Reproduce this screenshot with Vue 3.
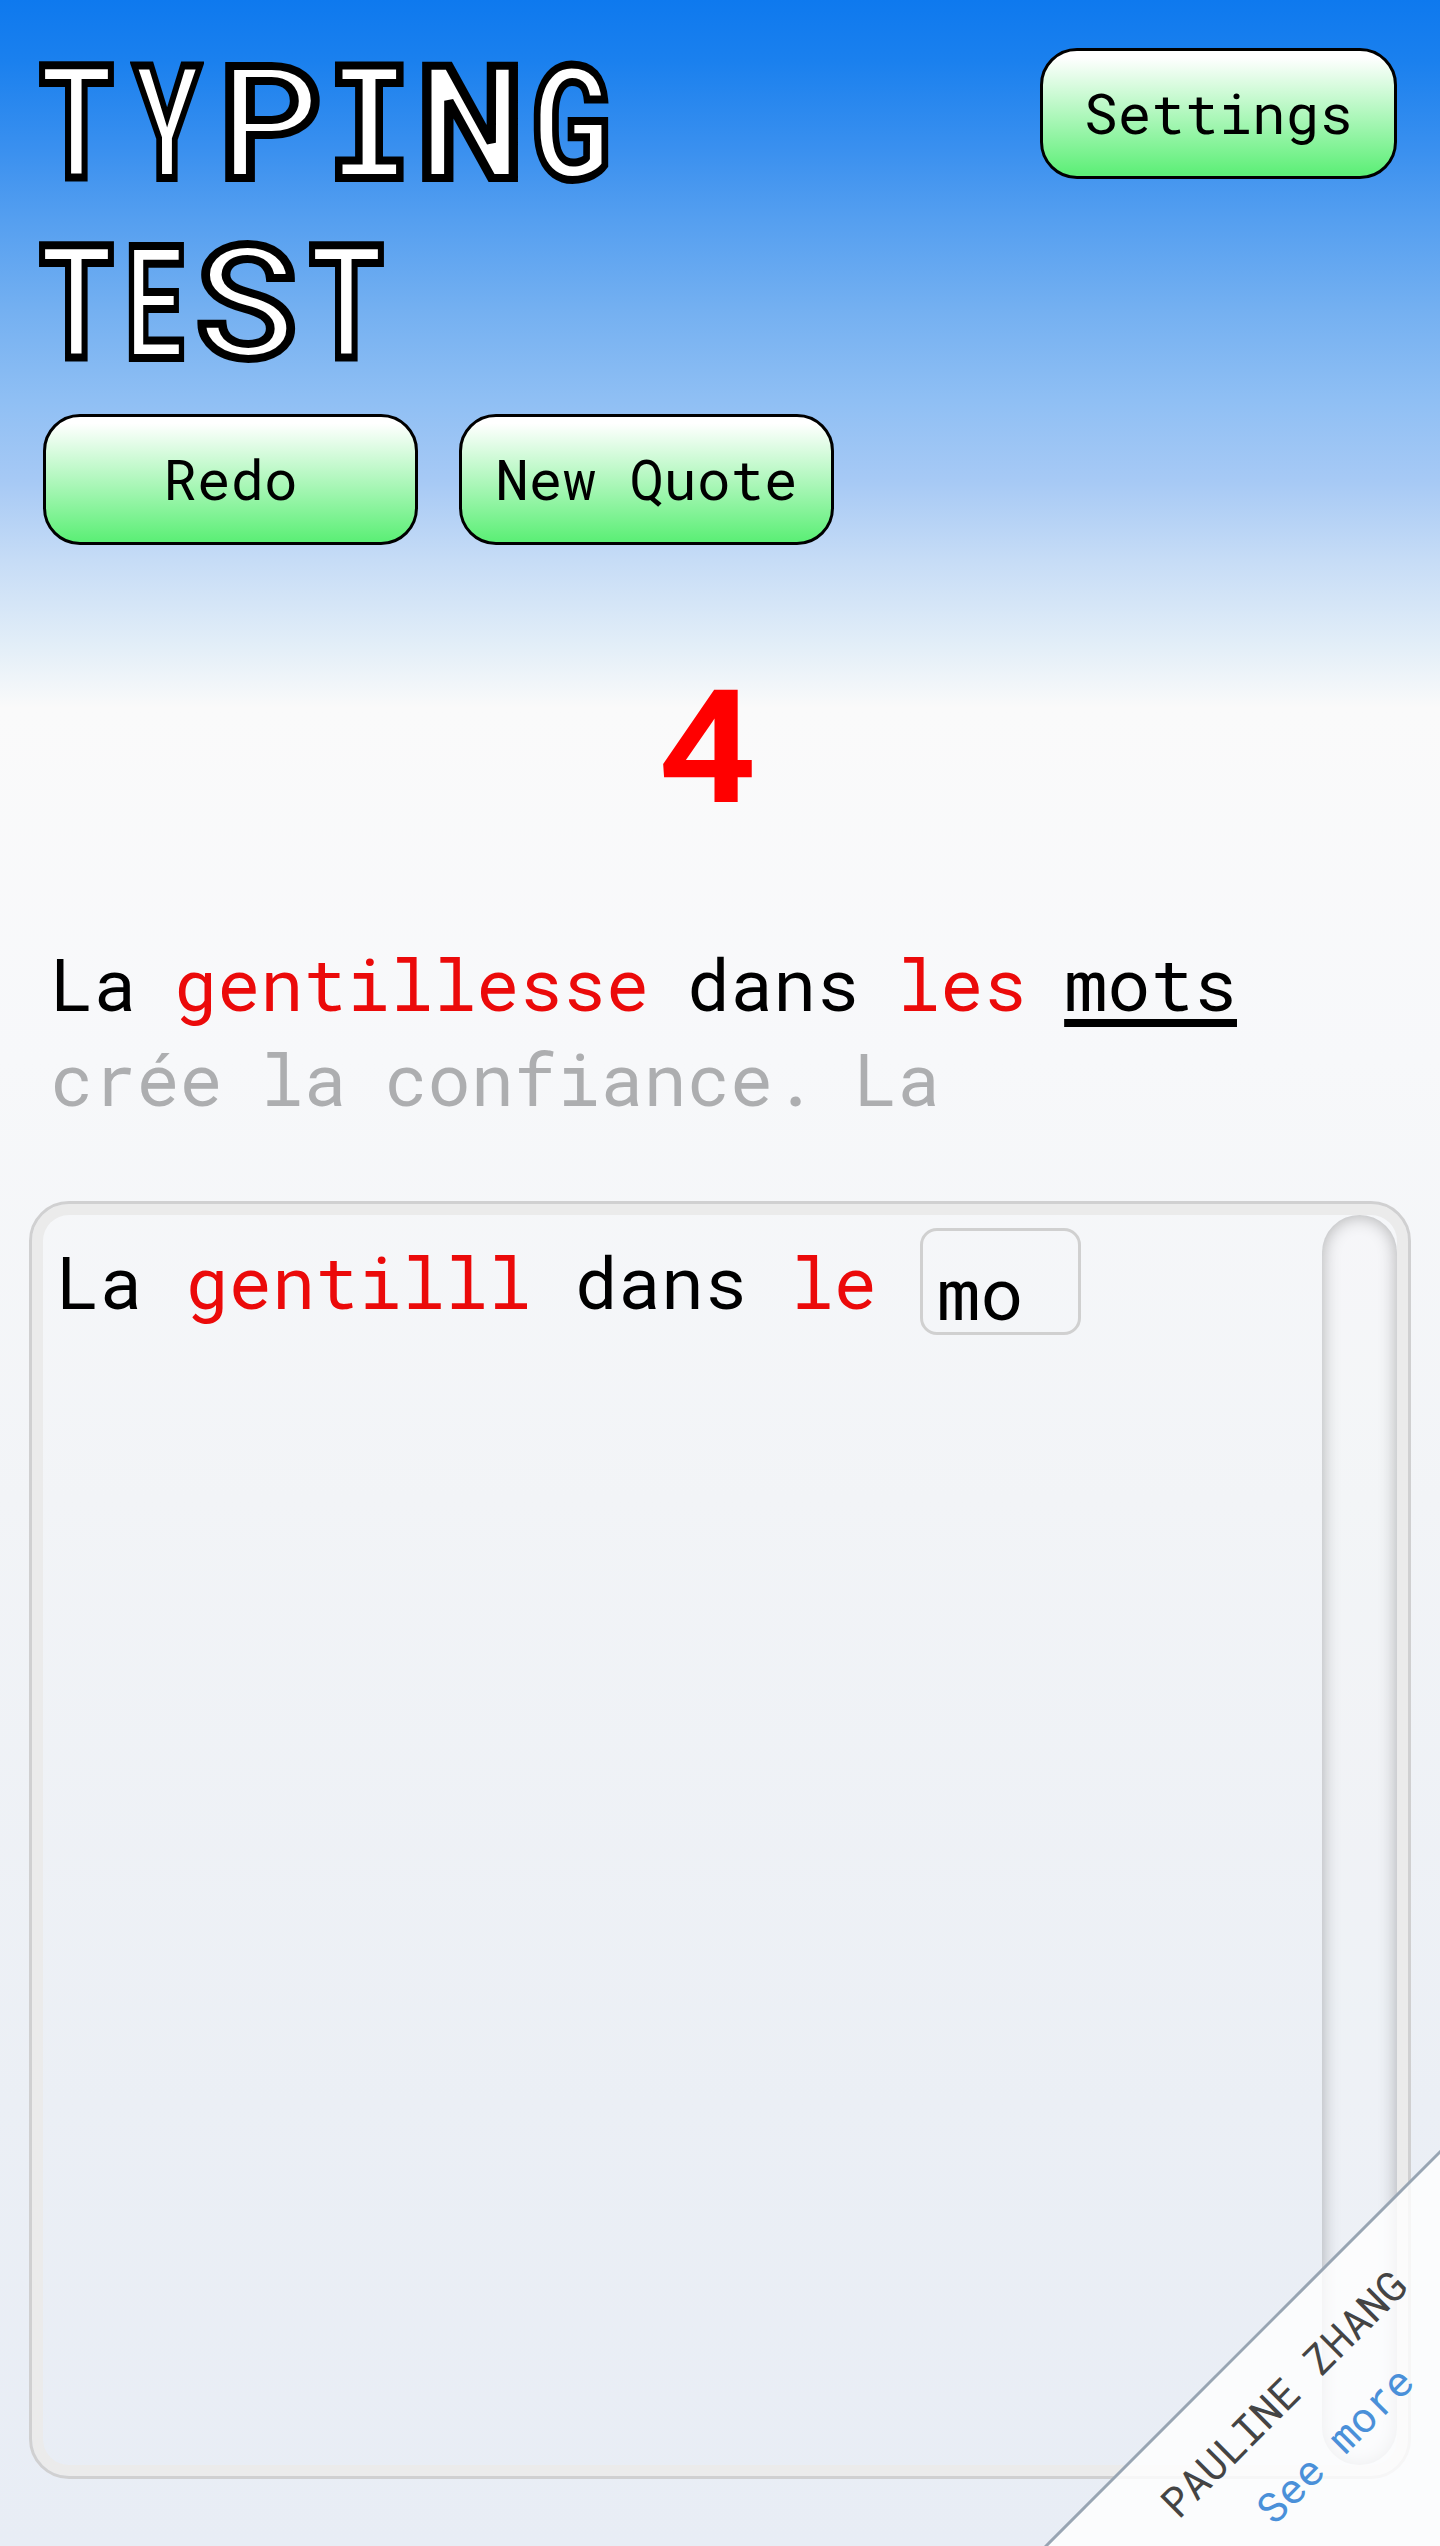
<script setup>
// Each glyph: character, advance box width, horizontal stretch, weight
const title = [
  [['T', 67.5, 0.76, 700], ['Y', 67.5, 0.72, 700], ['P', 90, 1.12, 500], ['I', 67.5, 0.94, 700], ['N', 90, 1.17, 500], ['G', 67.5, 0.84, 700]],
  [['T', 67.5, 0.76, 700], ['E', 45, 0.66, 700], ['S', 90, 1.1, 500], ['T', 67.5, 0.76, 700]],
]
const quote = [
  { text: 'La', state: 'done' },
  { text: 'gentillesse', state: 'wrong' },
  { text: 'dans', state: 'done' },
  { text: 'les', state: 'wrong' },
  { text: 'mots', state: 'current' },
  { text: 'crée', state: 'pending' },
  { text: 'la', state: 'pending' },
  { text: 'confiance.', state: 'pending' },
  { text: 'La', state: 'pending' },
]
const typed = [
  { text: 'La', state: 'done' },
  { text: 'gentilll', state: 'wrong' },
  { text: 'dans', state: 'done' },
  { text: 'le', state: 'wrong' },
]
</script>

<template>
  <div class="page">
    <header class="header">
      <h1 class="title">
        <span v-for="(line, i) in title" :key="i" class="title-line"><span v-for="(l, j) in line" :key="j" class="letter" :style="{ width: l[1] + 'px' }"><span class="glyph" :style="{ transform: `scaleX(${l[2]})`, fontWeight: l[3] }">{{ l[0] }}</span></span></span>
      </h1>
      <button class="btn settings">Settings</button>
    </header>
    <div class="actions">
      <button class="btn">Redo</button>
      <button class="btn">New Quote</button>
    </div>
    <div class="timer"><span class="digit">4</span></div>
    <p class="quote">
      <span v-for="(w, i) in quote" :key="i" :class="w.state">{{ w.text }}</span>
    </p>
    <main class="panel">
      <div class="entry">
        <span v-for="(w, i) in typed" :key="i" :class="w.state">{{ w.text }}</span>
        <div class="field"><span>mo</span></div>
      </div>
      <div class="scrollbar"></div>
    </main>
    <svg class="corner" width="396" height="396" viewBox="0 0 396 396">
      <path d="M396 1V396H1Z" fill="#fff" fill-opacity=".8" />
      <path d="M397 1L1 397" stroke="#98a5b3" stroke-width="3" />
      <g transform="rotate(-45)" text-anchor="middle">
        <text class="author" x="-3" y="357">PAULINE ZHANG</text>
        <text class="more" x="-3" y="429">See more</text>
      </g>
    </svg>
  </div>
</template>

<style>
body { margin: 0; }
</style>

<style scoped>
* { box-sizing: border-box; }
.page {
  position: relative;
  width: 1440px;
  height: 2546px;
  overflow: hidden;
  display: flex;
  flex-direction: column;
  font-family: "Roboto Mono", "Liberation Mono", monospace;
  color: #000;
  background: linear-gradient(180deg, #0e79ee 0, #1a80ee 60px, #3a90ef 150px, #559ff0 220px, #74b0f1 310px, #8fbff4 400px, #a6c9f5 480px, #c6dcf6 560px, #e4eff8 650px, #fafafa 708px, #f7f8fa 1060px, #f2f4f7 1500px, #ebeff5 2100px, #e8edf5 2546px);
}
.header {
  display: flex;
  justify-content: space-between;
  align-items: flex-start;
  height: 414px;
  padding: 48px 43px 0 43px;
}
.title {
  margin: 0;
  display: flex;
  flex-direction: column;
}
.title-line { display: flex; gap: 22.5px; height: 180px; padding-top: 16px; }
.letter { display: flex; justify-content: center; height: 113px; }
.glyph {
  font-size: 158px;
  line-height: 105px;
  color: #fff;
  -webkit-text-stroke: 8px #000;
  flex: none;
}
.btn {
  width: 375px;
  height: 131px;
  padding: 0 0 4px;
  border: 3px solid #000;
  border-radius: 37px;
  background: linear-gradient(180deg, #fff 5%, #5eef78 98%);
  font: 56px "Roboto Mono", "Liberation Mono", monospace;
  color: #000;
}
.settings { width: 357px; }
.actions { display: flex; gap: 41px; padding-left: 43px; height: 131px; }
.timer {
  height: 263px;
  margin-top: 96px;
  padding-left: 662px;
}
.digit {
  display: inline-block;
  font: 700 158px/200px "Roboto Mono", "Liberation Mono", monospace;
  color: #f00;
  transform: scaleX(1.08);
}
.quote {
  margin: 32px 0 0;
  width: 1300px;
  height: 190px;
  padding-left: 50px;
  display: flex;
  flex-wrap: wrap;
  column-gap: 37.5px;
  font-size: 72px;
  line-height: 95px;
}
.wrong { color: #eb0a0a; }
.current { text-decoration: underline; text-decoration-thickness: 8px; text-underline-offset: 8px; }
.pending { color: #adaeb0; }
.panel {
  width: 1382px;
  height: 1278px;
  margin: 75px 0 0 29px;
  border: 3px solid #d0d0d1;
  border-radius: 40px;
  box-shadow: inset 0 0 0 11px #ebebeb;
  padding: 11px;
  display: flex;
  justify-content: space-between;
}
.entry {
  display: flex;
  gap: 43.2px;
  align-items: flex-start;
  padding: 13px 0 0 13px;
  font-size: 72px;
  line-height: 108px;
}
.field {
  width: 161px;
  height: 107px;
  border: 3px solid #d0d0d0;
  border-radius: 17px;
  padding: 8px 0 0 14px;
}
.scrollbar {
  width: 75px;
  border-radius: 38px;
  background: rgba(250, 250, 250, .2);
  box-shadow: inset 0 0 18px rgba(0, 0, 0, .3);
}
.corner { position: absolute; right: 0; bottom: 0; }
.author { font-size: 42px; fill: #444; }
.more { font-size: 42px; fill: #4a90d9; }
</style>
